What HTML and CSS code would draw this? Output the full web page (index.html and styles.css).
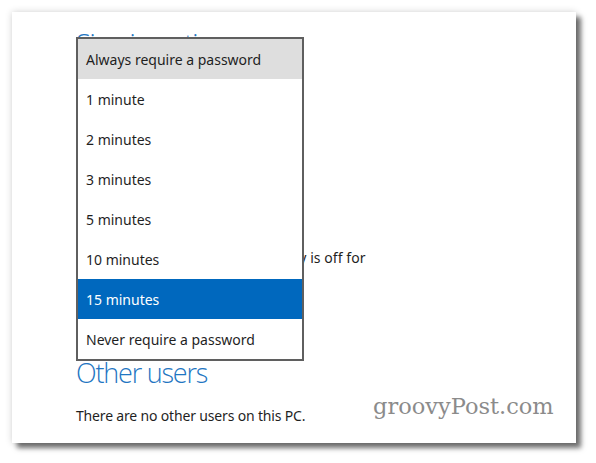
FILE: index.html
```html
<!DOCTYPE html>
<html>
<head>
<meta charset="utf-8">
<link rel="stylesheet" href="styles.css">
</head>
<body>
<div class="frame">
  <div class="content">
    <h2 class="heading first">Sign-in options</h2>
    <p class="line policy">Require password after the display is off for</p>
    <h2 class="heading second">Other users</h2>
    <p class="line last">There are no other users on this PC.</p>
  </div>
  <ul class="menu">
    <li class="item hover">Always require a password</li>
    <li class="item">1 minute</li>
    <li class="item">2 minutes</li>
    <li class="item">3 minutes</li>
    <li class="item">5 minutes</li>
    <li class="item">10 minutes</li>
    <li class="item selected">15 minutes</li>
    <li class="item">Never require a password</li>
  </ul>
  <div class="watermark">groovyPost.com</div>
</div>
</body>
</html>
```

FILE: styles.css
```css
html, body {
  margin: 0;
  padding: 0;
  background: #ffffff;
}
body {
  width: 596px;
  height: 463px;
  overflow: hidden;
  font-family: "Segoe UI", "Noto Sans", "Open Sans", sans-serif;
}
.frame {
  position: relative;
  margin: 12px 0 0 12px;
  width: 564px;
  height: 431px;
  background: #ffffff;
  box-shadow: 5px 5px 5px rgba(0,0,0,0.55), 0 0 7px rgba(0,0,0,0.18);
}
.content {
  padding: 15px 0 0 64px;
  display: flex;
  flex-direction: column;
  align-items: flex-start;
}
.heading {
  margin: 0;
  font-family: "Open Sans", "Noto Sans", sans-serif;
  font-weight: 300;
  font-size: 27px;
  letter-spacing: -1.2px;
  line-height: 34px;
  color: #1f76c2;
}
.heading.first {
  margin-bottom: 187px;
}
.line {
  margin: 0;
  font-size: 14px;
  line-height: 20px;
  color: #1f1f1f;
}
.line.policy {
  letter-spacing: 0.07px;
}
.heading.second {
  margin-top: 88px;
}
.line.last {
  margin-top: 16px;
  letter-spacing: -0.17px;
}
.menu {
  position: absolute;
  left: 64px;
  top: 25px;
  width: 224px;
  margin: 0;
  padding: 0;
  list-style: none;
  border: 2px solid #5f5f5f;
  background: #ffffff;
}
.item {
  height: 40px;
  display: flex;
  align-items: center;
  padding-left: 8px;
  font-size: 14px;
  color: #1f1f1f;
}
.item.hover {
  background: #dedede;
}
.item.selected {
  background: #0068be;
  color: #ffffff;
}
.watermark {
  position: absolute;
  left: 361px;
  top: 381px;
  font-family: "DejaVu Serif", "Liberation Serif", serif;
  font-size: 22.5px;
  color: #8b8b8b;
}
```
